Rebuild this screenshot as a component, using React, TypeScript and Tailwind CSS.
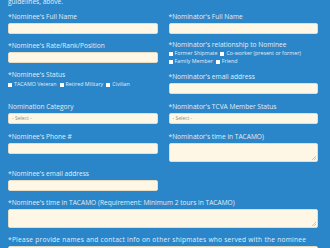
import React from 'react'

const font = { fontFamily: '"Open Sans", "DejaVu Sans", sans-serif' }

function Label({ children, wide = false }: { children: React.ReactNode; wide?: boolean }) {
    return (
        <p className={`text-[6.6px] leading-[8px] text-[#e1edf8] mb-[2px] whitespace-nowrap ${wide ? 'tracking-[0.25px]' : ''}`}>
            {children}
        </p>
    )
}

function TextInput() {
    return <div className="h-[11px] w-full rounded-[2px] bg-[#fff7e5] border border-[#e8ddc4]" />
}

function Select() {
    return (
        <div className="h-[11px] w-full rounded-[2px] bg-[#fff7e5] border border-[#e8ddc4] flex items-center px-[3px]">
            <span className="text-[5px] text-[#8a8a8a]">- Select -</span>
        </div>
    )
}

function TextArea() {
    return (
        <div className="h-[19px] w-full rounded-[2px] bg-[#fff7e5] border border-[#e8ddc4] relative">
            <svg className="absolute right-[1px] bottom-[1px] w-[4px] h-[4px]" viewBox="0 0 4 4">
                <path d="M4 0L0 4M4 2L2 4" stroke="#a9a39a" strokeWidth={0.6} />
            </svg>
        </div>
    )
}

function Checks({ items }: { items: string[] }) {
    return (
        <div className="flex items-center gap-[3px] text-[5.3px] leading-[5px] text-[#e1edf8] whitespace-nowrap">
            {items.map((item) => (
                <span key={item} className="flex items-center gap-[2px]">
                    <span className="w-[4px] h-[4px] bg-white inline-block" />
                    {item}
                </span>
            ))}
        </div>
    )
}

export default function App() {
    return (
        <div className="w-[330px] h-[248px] overflow-hidden bg-[#2a86c8]" style={font}>
            <div className="pl-[8px] pr-[12px]">
                <p className="text-[6.6px] leading-[8px] text-[#e1edf8] -mt-[2px]">guidelines, above.</p>

                <div className="grid grid-cols-2 gap-x-[11px] mt-[7px] items-start">
                    {/* fila 1 */}
                    <div className="pb-[8px]">
                        <Label>*Nominee's Full Name</Label>
                        <TextInput />
                    </div>
                    <div className="pb-[8px]">
                        <Label>*Nominator's Full Name</Label>
                        <TextInput />
                    </div>

                    {/* fila 2 */}
                    <div className="pb-[8px]">
                        <Label>*Nominee's Rate/Rank/Position</Label>
                        <TextInput />
                    </div>
                    <div className="pb-[6px] -mt-[1px]">
                        <Label>*Nominator's relationship to Nominee</Label>
                        <div className="flex flex-col gap-[3px]">
                            <Checks items={['Former Shipmate', 'Co-worker (present or former)']} />
                            <Checks items={['Family Member', 'Friend']} />
                        </div>
                    </div>

                    {/* fila 3 */}
                    <div className="pb-[8px]">
                        <Label>*Nominee's Status</Label>
                        <div className="mt-[3px]">
                            <Checks items={['TACAMO Veteran', 'Retired Military', 'Civilian']} />
                        </div>
                    </div>
                    <div className="pb-[9px] mt-[2px]">
                        <Label>*Nominator's email address</Label>
                        <TextInput />
                    </div>

                    {/* fila 4 */}
                    <div className="pb-[9px]">
                        <Label>Nomination Category</Label>
                        <Select />
                    </div>
                    <div className="pb-[9px]">
                        <Label>*Nominator's TCVA Member Status</Label>
                        <Select />
                    </div>

                    {/* fila 5 */}
                    <div className="pb-[8px]">
                        <Label>*Nominee's Phone #</Label>
                        <TextInput />
                    </div>
                    <div className="pb-[8px]">
                        <Label>*Nominator's time in TACAMO)</Label>
                        <TextArea />
                    </div>

                    {/* fila 6 */}
                    <div className="pb-[8px]">
                        <Label>*Nominee's email address</Label>
                        <TextInput />
                    </div>
                    <div />
                </div>

                <div className="pb-[8px]">
                    <Label>*Nominee's time in TACAMO (Requirement: Minimum 2 tours in TACAMO)</Label>
                    <TextArea />
                </div>
                <div>
                    <Label wide>*Please provide names and contact info on other shipmates who served with the nominee</Label>
                    <TextArea />
                </div>
            </div>
        </div>
    )
}
